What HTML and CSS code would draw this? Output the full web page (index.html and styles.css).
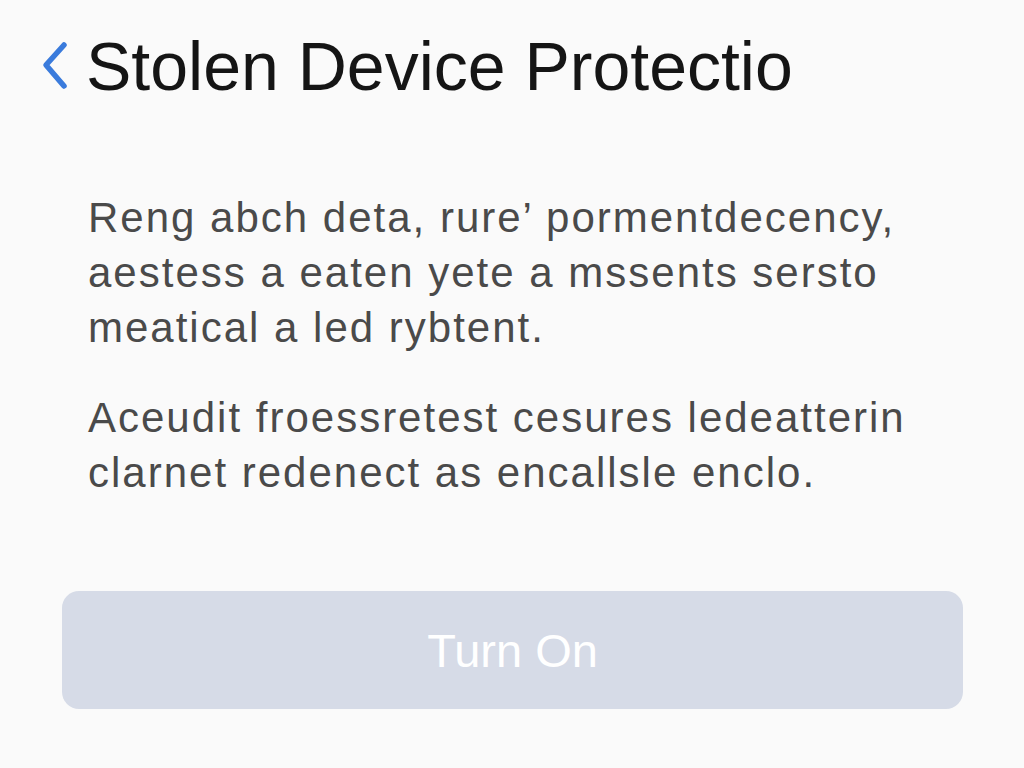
FILE: index.html
```html
<!DOCTYPE html>
<html lang="en">
<head>
    <meta charset="UTF-8">
    <meta name="viewport" content="width=device-width, initial-scale=1.0">
    <title>Stolen Device Protection</title>
    <link rel="stylesheet" href="styles.css">
</head>
<body>
    <header class="nav">
        <svg class="back" width="34" height="54" viewBox="0 0 34 54">
            <path d="M28 6 L10 26 L28 47" fill="none" stroke="#3a7bdc" stroke-width="5.5" stroke-linecap="round" stroke-linejoin="round"/>
        </svg>
        <h1 class="title">Stolen Device Protectio</h1>
    </header>

    <main class="content">
        <p class="desc">Reng abch deta, rure’ pormentdecency, aestess a eaten yete a mssents sersto meatical a led rybtent.</p>
        <p class="desc">Aceudit froessretest cesures ledeatterin clarnet redenect as encallsle enclo.</p>
    </main>

    <div class="actions">
        <button class="turn-on" disabled>Turn On</button>
    </div>
</body>
</html>
```

FILE: styles.css
```css
body {
    margin: 0;
    background-color: #fafafa;
    font-family: "Liberation Sans", Arial, sans-serif;
    color: #111;
}
.nav {
    display: flex;
    align-items: center;
    gap: 16px;
    padding: 36px 0 0 36px;
}
.title {
    margin: 0;
    font-size: 68px;
    font-weight: normal;
    line-height: 60px;
    color: #151515;
}
.content {
    padding: 94px 60px 0 88px;
}
.desc {
    margin: 0 0 35px;
    font-size: 42px;
    line-height: 55px;
    letter-spacing: 2px;
    color: #4a4a4a;
}
.actions {
    padding: 56px 61px 0 62px;
}
.turn-on {
    display: block;
    width: 100%;
    height: 118px;
    border: none;
    border-radius: 17px;
    background-color: #d6dbe7;
    color: #ffffff;
    font-family: "Liberation Sans", Arial, sans-serif;
    font-size: 47px;
}
```
